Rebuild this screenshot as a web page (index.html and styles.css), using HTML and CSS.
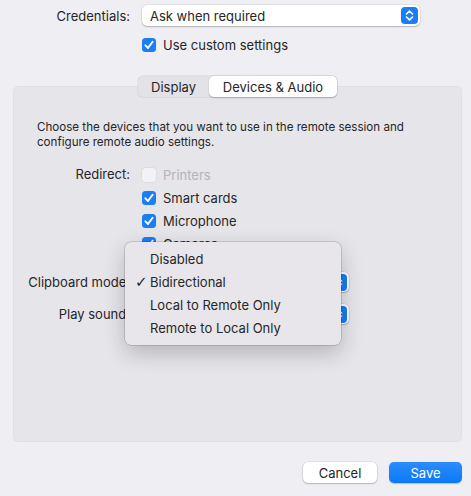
FILE: index.html
```html
<!DOCTYPE html>
<html lang="en">
<head>
  <meta charset="UTF-8" />
  <title>Devices &amp; Audio</title>
  <link rel="stylesheet" href="styles.css">
</head>
<body>
  <div class="window">
    <!-- Credentials -->
    <div class="form-row top-row">
      <span class="label">Credentials:</span>
      <div class="popup popup-wide">
        <span class="popup-text">Ask when required</span>
        <span class="stepper">
          <svg width="17" height="17" viewBox="0 0 17 17"><rect width="17" height="17" rx="4" fill="#1b7ef5"/><path d="M5.5 7 L8.5 4.2 L11.5 7 M5.5 10 L8.5 12.8 L11.5 10" fill="none" stroke="#fff" stroke-width="1.6" stroke-linecap="round" stroke-linejoin="round"/></svg>
        </span>
      </div>
    </div>

    <div class="form-row custom-row">
      <span></span>
      <label class="check"><span class="checkbox on"><svg width="14" height="14" viewBox="0 0 14 14"><path d="M3.4 7.3 L6 10 L10.6 3.8" fill="none" stroke="#fff" stroke-width="1.9" stroke-linecap="round" stroke-linejoin="round"/></svg></span>Use custom settings</label>
    </div>

    <!-- Tabs -->
    <div class="tabs">
      <span class="tab">Display</span>
      <span class="tab active">Devices &amp; Audio</span>
    </div>

    <section class="group">
      <p class="desc">Choose the devices that you want to use in the remote session and configure remote audio settings.</p>

      <div class="form-row redirect-row">
        <span class="label">Redirect:</span>
        <div class="check-list">
          <label class="check disabled"><span class="checkbox"></span>Printers</label>
          <label class="check"><span class="checkbox on"><svg width="14" height="14" viewBox="0 0 14 14"><path d="M3.4 7.3 L6 10 L10.6 3.8" fill="none" stroke="#fff" stroke-width="1.9" stroke-linecap="round" stroke-linejoin="round"/></svg></span>Smart cards</label>
          <label class="check"><span class="checkbox on"><svg width="14" height="14" viewBox="0 0 14 14"><path d="M3.4 7.3 L6 10 L10.6 3.8" fill="none" stroke="#fff" stroke-width="1.9" stroke-linecap="round" stroke-linejoin="round"/></svg></span>Microphone</label>
          <label class="check"><span class="checkbox on"><svg width="14" height="14" viewBox="0 0 14 14"><path d="M3.4 7.3 L6 10 L10.6 3.8" fill="none" stroke="#fff" stroke-width="1.9" stroke-linecap="round" stroke-linejoin="round"/></svg></span>Cameras</label>
        </div>
      </div>

      <!-- popup values are hidden under the open menu -->
      <div class="form-row popup-row clip-row">
        <span class="label">Clipboard mode:</span>
        <div class="popup popup-small">
          <span class="popup-text"></span>
          <span class="stepper">
            <svg width="17" height="17" viewBox="0 0 17 17"><rect width="17" height="17" rx="4" fill="#1b7ef5"/><path d="M5.5 7 L8.5 4.2 L11.5 7 M5.5 10 L8.5 12.8 L11.5 10" fill="none" stroke="#fff" stroke-width="1.6" stroke-linecap="round" stroke-linejoin="round"/></svg>
          </span>
        </div>
      </div>

      <div class="form-row popup-row sound-row">
        <span class="label">Play sound:</span>
        <div class="popup popup-small">
          <span class="popup-text"></span>
          <span class="stepper">
            <svg width="17" height="17" viewBox="0 0 17 17"><rect width="17" height="17" rx="4" fill="#1b7ef5"/><path d="M5.5 7 L8.5 4.2 L11.5 7 M5.5 10 L8.5 12.8 L11.5 10" fill="none" stroke="#fff" stroke-width="1.6" stroke-linecap="round" stroke-linejoin="round"/></svg>
          </span>
        </div>
      </div>
    </section>

    <div class="buttons">
      <button class="btn">Cancel</button>
      <button class="btn primary">Save</button>
    </div>

    <!-- Open clipboard popup menu -->
    <ul class="menu">
      <li>Disabled</li>
      <li class="selected"><span class="tick">✓</span>Bidirectional</li>
      <li>Local to Remote Only</li>
      <li>Remote to Local Only</li>
    </ul>
  </div>
</body>
</html>
```

FILE: styles.css
```css
body {
  margin: 0;
  background: #efeef3;
  font-family: 'Inter', 'Liberation Sans', sans-serif;
  font-size: 13px;
  color: #262626;
}

.window {
  position: relative;
  width: 471px;
  height: 496px;
  padding-top: 5px;
  box-sizing: border-box;
}

.form-row {
  display: grid;
  grid-template-columns: 130px auto;
  column-gap: 12px;
  align-items: center;
}

.label {
  text-align: right;
}

.popup {
  display: flex;
  align-items: center;
  justify-content: space-between;
  background: #fff;
  border-radius: 5px;
  box-shadow: 0 0 0 0.5px rgba(0, 0, 0, 0.12), 0 1px 1.5px rgba(0, 0, 0, 0.2);
  box-sizing: border-box;
  padding: 0 2px 0 8px;
}

.popup-wide {
  width: 278px;
  height: 21px;
}

.popup-small {
  width: 207px;
  height: 20px;
}

.stepper svg {
  display: block;
}

.custom-row {
  margin-top: 11px;
  height: 14px;
}

.check {
  display: flex;
  align-items: center;
  gap: 7px;
}

.checkbox {
  width: 14px;
  height: 14px;
  border-radius: 3.5px;
  box-sizing: border-box;
  background: #fff;
  box-shadow: 0 0 0 0.5px rgba(0, 0, 0, 0.15), 0 0.5px 1px rgba(0, 0, 0, 0.15);
  flex-shrink: 0;
}

.checkbox.on {
  background: #1b7ef5;
  box-shadow: none;
}

.checkbox svg {
  display: block;
}

.check.disabled {
  color: #b4b3b8;
}

.check.disabled .checkbox {
  background: #f3f2f6;
  box-shadow: 0 0 0 0.5px rgba(0, 0, 0, 0.08);
}

.tabs {
  position: relative;
  z-index: 1;
  display: flex;
  width: 199px;
  height: 21px;
  margin: 25px 0 -11px 138px;
  background: #e3e2e7;
  border-radius: 5px;
  box-shadow: 0 0 0 0.5px rgba(0, 0, 0, 0.1);
}

.tab {
  display: flex;
  align-items: center;
  justify-content: center;
  height: 21px;
}

.tab:first-child {
  width: 71px;
}

.tab.active {
  width: 128px;
  background: #fff;
  border-radius: 5px;
  box-shadow: 0 0.5px 1.5px rgba(0, 0, 0, 0.25);
}

.group {
  margin: 0 9px 0 13px;
  height: 356px;
  box-sizing: border-box;
  padding-top: 34px;
  background: #e6e5ea;
  border-radius: 6px;
  box-shadow: inset 0 0 0 0.5px rgba(0, 0, 0, 0.05);
}

.group .form-row {
  grid-template-columns: 117px auto;
}

.desc {
  margin: 0 0 0 24px;
  width: 380px;
  font-size: 11.6px;
  line-height: 15px;
}

.redirect-row {
  margin-top: 13px;
  align-items: start;
}

.redirect-row .label {
  line-height: 23px;
}

.check-list .check {
  height: 23px;
}

.clip-row {
  margin-top: 17px;
}

.sound-row {
  margin-top: 12px;
}

.buttons {
  display: flex;
  justify-content: flex-end;
  gap: 12px;
  margin: 20px 9px 0 0;
}

.btn {
  height: 21px;
  width: 74px;
  border: none;
  border-radius: 5px;
  background: #fff;
  font-family: inherit;
  font-size: 13px;
  color: #262626;
  box-shadow: 0 0 0 0.5px rgba(0, 0, 0, 0.12), 0 1px 1.5px rgba(0, 0, 0, 0.2);
  padding: 0;
}

.btn.primary {
  width: 73px;
  background: linear-gradient(#2b8cfd, #0b79f7);
  color: #fff;
  box-shadow: 0 0.5px 1px rgba(0, 0, 0, 0.2);
}

.menu {
  position: absolute;
  left: 125px;
  top: 242px;
  width: 216px;
  height: 103px;
  box-sizing: border-box;
  margin: 0;
  padding: 6px 0 4px;
  list-style: none;
  background: #e8e6ea;
  border-radius: 6px;
  box-shadow: 0 0 0 0.5px rgba(0, 0, 0, 0.25), 0 8px 22px rgba(0, 0, 0, 0.22);
}

.menu li {
  position: relative;
  height: 23px;
  line-height: 23px;
  padding-left: 25px;
}

.tick {
  position: absolute;
  left: 10px;
  font-family: 'DejaVu Sans', sans-serif;
  font-size: 15px;
}
```
